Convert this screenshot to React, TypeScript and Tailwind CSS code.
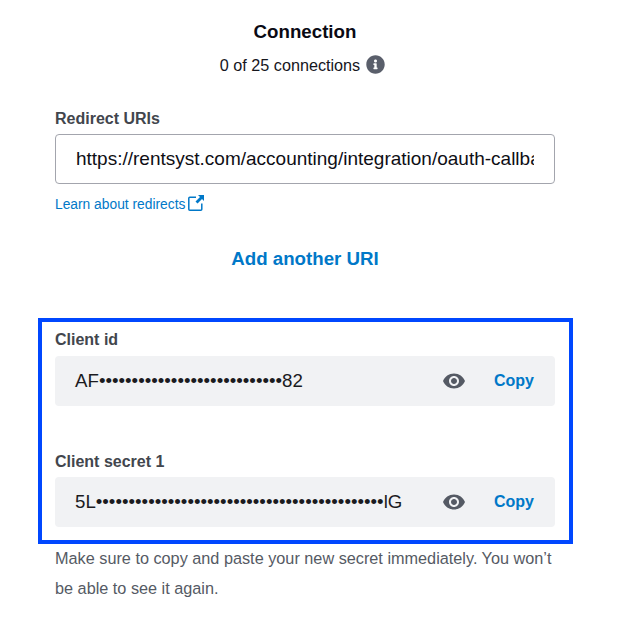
import { FaInfoCircle } from "react-icons/fa";
import { MdVisibility } from "react-icons/md";

function ExternalIcon() {
  return (
    <svg width="16" height="16" viewBox="0 0 16 16" fill="none" className="ml-[3px] mb-[4px]">
      <path d="M8 2.2H1.8C1.2 2.2.8 2.6.8 3.2v11c0 .6.4 1 1 1h11c.6 0 1-.4 1-1V8.5" stroke="#0078c8" strokeWidth="1.5" />
      <path d="M10 0h6v6l-2-2-4.5 4.5-2-2L12 2z" fill="#0078c8" />
    </svg>
  );
}

function SecretRow({ label, value, gap, top }: { label: string; value: string; gap: string; top: string }) {
  return (
    <div className={top}>
      <div className="text-[16px] leading-[20px] font-bold text-[#42464d]">{label}</div>
      <div className={`${gap} h-[50px] rounded-[4px] bg-[#f1f2f4] pl-[20px] pr-[21px] flex items-center`}>
        <span className="flex-1 text-[18.7px] text-[#1b1b1f] whitespace-nowrap">{value}</span>
        <MdVisibility className="text-[#555a64] text-[24px] mr-[28px]" />
        <span className="text-[16px] font-bold text-[#0078c8]">Copy</span>
      </div>
    </div>
  );
}

export default function App() {
  return (
    <div className="w-[617px] h-[621px] bg-white overflow-hidden font-['Liberation_Sans',Arial,sans-serif]">
      <div className="ml-[55px] w-[500px] pt-[21px]">
        <h2 className="text-[18.7px] leading-[22px] font-bold text-[#0a0a14] text-center">Connection</h2>
        <div className="mt-[12px] h-[21px] pr-[5px] flex items-center justify-center text-[16.2px] leading-[20px] text-[#16161d]">
          <span className="mb-[2px]">0 of 25 connections</span>
          <FaInfoCircle className="ml-[6px] mb-[3px] text-[19px] text-[#5a5f6b]" />
        </div>

        <div className="mt-[33px] text-[16px] leading-[20px] font-bold text-[#42464d]">Redirect URIs</div>
        <input
          readOnly
          value="https://rentsyst.com/accounting/integration/oauth-callback"
          className="mt-[5px] block w-full h-[50px] rounded-[4px] border border-[#a3a5ad] pl-[20px] pr-[20px] text-[19px] text-[#0e0e15] outline-none"
        />
        <div className="mt-[11px] flex items-center text-[13.8px] leading-[20px] text-[#0078c8]">
          <span>Learn about redirects</span>
          <ExternalIcon />
        </div>

        <div className="mt-[33px] text-center text-[18.7px] leading-[22px] font-bold text-[#0078c8]">Add another URI</div>

        <div className="mt-[48px] -ml-[17px] -mr-[18px] border-4 border-[#0047ff] pl-[13px] pr-[14px] pt-[8px] pb-[13px]">
          <SecretRow label="Client id" gap="mt-[6px]" value={"AF" + "•".repeat(28) + "82"} top="" />
          <SecretRow label="Client secret 1" gap="mt-[5px]" value={"5L" + "•".repeat(44) + "lG"} top="mt-[46px]" />
        </div>

        <p className="-mt-[1px] text-[16.25px] leading-[30px] text-[#555a64]">
          Make sure to copy and paste your new secret immediately. You won’t be able to see it again.
        </p>
      </div>
    </div>
  );
}
